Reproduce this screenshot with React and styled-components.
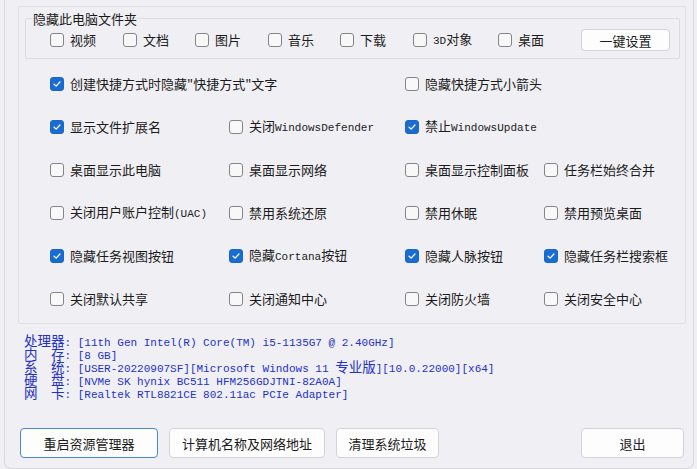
import React from "react";
import styled, { createGlobalStyle } from "styled-components";

const Check = ({ checked }) => (
  <Box $checked={checked}>
    {checked && (
      <svg width="14" height="14" viewBox="0 0 14 14">
        <path
          d="M3.6 7.3 L6 9.5 L10.4 4.7"
          fill="none"
          stroke="#fff"
          strokeWidth="1.5"
          strokeLinecap="round"
          strokeLinejoin="round"
        />
      </svg>
    )}
  </Box>
);

const App = () => {
  return (
    <>
      <GlobalStyle />
      <Frame>
        <Panel>
          <GroupBox>
            <Legend>隐藏此电脑文件夹</Legend>
            <FolderRow>
              {folders.map((f, i) => (
                <Option key={i}>
                  <Check />
                  <span>{f}</span>
                </Option>
              ))}
              <SmallButton>一键设置</SmallButton>
            </FolderRow>
          </GroupBox>
          <OptionGrid>
            {options.map((o, i) =>
              o.label === null ? (
                <span key={i} />
              ) : (
                <Option key={i} $span={o.span}>
                  <Check checked={o.checked} />
                  <span>{o.label}</span>
                </Option>
              )
            )}
          </OptionGrid>
        </Panel>
        <Info>
          {info.map((row) => (
            <InfoLine key={row.label}>
              <Wide>{row.label}</Wide>
              {": "}
              {row.value}
            </InfoLine>
          ))}
        </Info>
        <ButtonBar>
          <Button $w={138} $focus>重启资源管理器</Button>
          <Button $w={156}>计算机名称及网络地址</Button>
          <Button $w={103}>清理系统垃圾</Button>
          <Spacer />
          <Button $w={103}>退出</Button>
        </ButtonBar>
      </Frame>
    </>
  );
};

const GlobalStyle = createGlobalStyle`
  html, body {
    margin: 0;
    padding: 0;
    background: #f0eff3;
    overflow: hidden;
  }
  body {
    font-family: "Noto Sans CJK SC", "Noto Sans", sans-serif;
    font-size: 13px;
    color: #1b1b1b;
  }
`;

const Frame = styled.div`
  box-sizing: border-box;
  margin-left: 4px;
  width: 690px;
  height: 469px;
  border: 1px solid #d9d8dd;
  border-top: none;
  border-radius: 0 0 7px 7px;
  display: flex;
  flex-direction: column;
`;

const Panel = styled.div`
  box-sizing: border-box;
  margin: 6px 0 0 13px;
  width: 668px;
  height: 318px;
  border: 1px solid #e0dfe4;
  border-radius: 2px;
`;

const GroupBox = styled.fieldset`
  margin: 4px 5px 0 6px;
  padding: 0 9px 4px 7px;
  border: 1px solid #dcdbe0;
  border-radius: 2px;
  min-width: 0;
`;

const Legend = styled.legend`
  padding: 0;
  line-height: 15px;
  font-size: 13px;
  color: #1b1b1b;
`;

const FolderRow = styled.div`
  display: grid;
  grid-template-columns: 73px 72px 73px 72px 73px 85px auto 1fr;
  align-items: center;
  height: 28px;
  padding-left: 17px;
`;

const Option = styled.label`
  display: flex;
  align-items: center;
  gap: 6px;
  white-space: nowrap;
  line-height: 16px;
  grid-column: ${(p) => (p.$span ? `span ${p.$span}` : "auto")};
`;

const Box = styled.span`
  box-sizing: border-box;
  flex: none;
  width: 14px;
  height: 14px;
  border-radius: 3px;
  border: 1px solid ${(p) => (p.$checked ? "#1a67c9" : "#858489")};
  background: ${(p) => (p.$checked ? "#1a6dd0" : "#f8f8f9")};
  display: flex;
  align-items: center;
  justify-content: center;
  svg {
    display: block;
  }
`;

const Lat = styled.span`
  font-family: "Liberation Mono", monospace;
  font-size: 11px;
`;

const SmallButton = styled.button`
  justify-self: end;
  width: 89px;
  height: 22px;
  padding: 0;
  background: #fdfdfd;
  border: 1px solid #d3d2d7;
  border-radius: 4px;
  font-family: "Noto Sans CJK SC", sans-serif;
  font-size: 13px;
  color: #1b1b1b;
`;

const OptionGrid = styled.div`
  margin-top: 3px;
  padding-left: 31px;
  display: grid;
  grid-template-columns: 179px 176px 139px 1fr;
  grid-auto-rows: 43px;
  align-items: center;
`;

const Info = styled.div`
  margin: 10px 0 0 19px;
  color: #2431c8;
  font-family: "Liberation Mono", "Noto Sans CJK SC", monospace;
  font-size: 11px;
`;

const InfoLine = styled.div`
  height: 13px;
  line-height: 13px;
  white-space: pre;
`;

const Wide = styled.span`
  font-family: "Noto Sans CJK SC", sans-serif;
  font-size: 13.5px;
  line-height: 13px;
`;

const ButtonBar = styled.div`
  margin-top: auto;
  display: flex;
  gap: 11px;
  padding: 0 9px 10px 15px;
`;

const Spacer = styled.div`
  flex: 1;
`;

const Button = styled.button`
  box-sizing: border-box;
  width: ${(p) => p.$w}px;
  height: 30px;
  padding: 0;
  background: #fdfdfd;
  border: 1px solid ${(p) => (p.$focus ? "#4d88d6" : "#d3d2d7")};
  border-radius: 4px;
  font-family: "Noto Sans CJK SC", sans-serif;
  font-size: 13px;
  color: #1b1b1b;
`;

const folders = [
  "视频",
  "文档",
  "图片",
  "音乐",
  "下载",
  <><Lat>3D</Lat>对象</>,
  "桌面",
];

const options = [
  { label: <>创建快捷方式时隐藏"快捷方式"文字</>, checked: true, span: 2 },
  { label: "隐藏快捷方式小箭头" },
  { label: null },
  { label: "显示文件扩展名", checked: true },
  { label: <>关闭<Lat>WindowsDefender</Lat></> },
  { label: <>禁止<Lat>WindowsUpdate</Lat></>, checked: true },
  { label: null },
  { label: "桌面显示此电脑" },
  { label: "桌面显示网络" },
  { label: "桌面显示控制面板" },
  { label: "任务栏始终合并" },
  { label: <>关闭用户账户控制<Lat>(UAC)</Lat></> },
  { label: "禁用系统还原" },
  { label: "禁用休眠" },
  { label: "禁用预览桌面" },
  { label: "隐藏任务视图按钮", checked: true },
  { label: <>隐藏<Lat>Cortana</Lat>按钮</>, checked: true },
  { label: "隐藏人脉按钮", checked: true },
  { label: "隐藏任务栏搜索框", checked: true },
  { label: "关闭默认共享" },
  { label: "关闭通知中心" },
  { label: "关闭防火墙" },
  { label: "关闭安全中心" },
];

const info = [
  { label: "处理器", value: "[11th Gen Intel(R) Core(TM) i5-1135G7 @ 2.40GHz]" },
  { label: "内　存", value: "[8 GB]" },
  {
    label: "系　统",
    value: (
      <>
        [USER-20220907SF][Microsoft Windows 11 <Wide>专业版</Wide>][10.0.22000][x64]
      </>
    ),
  },
  { label: "硬　盘", value: "[NVMe SK hynix BC511 HFM256GDJTNI-82A0A]" },
  { label: "网　卡", value: "[Realtek RTL8821CE 802.11ac PCIe Adapter]" },
];

export default App;
